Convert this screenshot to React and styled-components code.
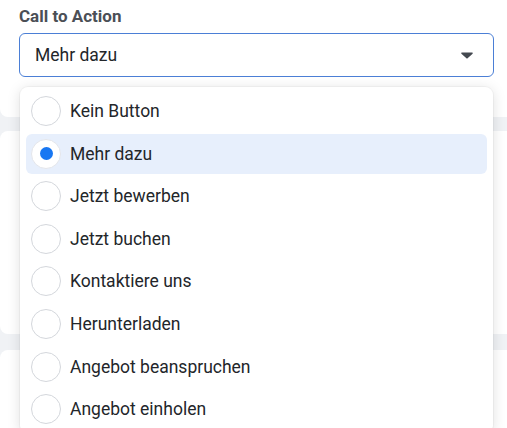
import React, { useState } from "react";
import styled, { createGlobalStyle } from "styled-components";

const GlobalStyle = createGlobalStyle`
  html, body {
    margin: 0;
    padding: 0;
    background: #f0f2f5;
    overflow: hidden;
    font-family: Roboto, "Liberation Sans", Arial, sans-serif;
  }
`;

const options = [
  "Kein Button",
  "Mehr dazu",
  "Jetzt bewerben",
  "Jetzt buchen",
  "Kontaktiere uns",
  "Herunterladen",
  "Angebot beanspruchen",
  "Angebot einholen",
];

const Page = styled.div`
  display: flex;
  flex-direction: column;
  width: 530px;
  height: 428px;
  overflow: hidden;
`;

const Card = styled.div`
  background: #fff;
  border-radius: 8px;
  height: ${(p) => p.h}px;
  margin-top: ${(p) => p.mt || 0}px;
  flex-shrink: 0;
  position: relative;
  z-index: ${(p) => p.z || 0};
`;

const TopCard = styled(Card)`
  border-radius: 0 0 8px 8px;
  padding: 6px 13px 0 19px;
  box-sizing: border-box;
`;

const Label = styled.div`
  font-size: 17px;
  line-height: 20px;
  font-weight: 700;
  color: #4b4f56;
  margin-bottom: 7px;
`;

const Field = styled.div`
  position: relative;
  width: 475px;
`;

const Select = styled.div`
  display: flex;
  align-items: center;
  justify-content: space-between;
  height: 44px;
  box-sizing: border-box;
  border: 1px solid #4b7fd6;
  border-radius: 6px;
  padding: 0 20px 0 15px;
  font-size: 17.5px;
  color: #23262a;
  background: #fff;
`;

const Menu = styled.div`
  position: absolute;
  top: 54px;
  left: 1px;
  width: 473px;
  background: #fff;
  border-radius: 8px;
  box-shadow: 0 2px 14px rgba(0, 0, 0, 0.13), 0 0 0 1px rgba(0, 0, 0, 0.03);
  padding: 4px 6px;
  box-sizing: border-box;
  display: flex;
  flex-direction: column;
  gap: 2.6px;
`;

const Option = styled.div`
  display: flex;
  align-items: center;
  gap: 9px;
  height: 40px;
  padding: 0 5px;
  border-radius: 6px;
  background: ${(p) => (p.selected ? "#e7effc" : "transparent")};
  font-size: 17.5px;
  color: #23262a;
  cursor: pointer;
`;

const Radio = styled.span`
  width: 30px;
  height: 30px;
  box-sizing: border-box;
  border-radius: 50%;
  border: 1px solid ${(p) => (p.checked ? "#e4e6eb" : "#d4d7dc")};
  background: #fff;
  display: flex;
  align-items: center;
  justify-content: center;
  flex-shrink: 0;

  &::after {
    content: "";
    width: 13px;
    height: 13px;
    border-radius: 50%;
    background: #1877f2;
    display: ${(p) => (p.checked ? "block" : "none")};
  }
`;

const Caret = () => (
  <svg width="12" height="7" viewBox="0 0 12 7">
    <path d="M1 0.5h10c.7 0 1 .7.6 1.2L6.6 6.3c-.3.4-.9.4-1.2 0L.4 1.7C0 1.2.3.5 1 .5z" fill="#444950" />
  </svg>
);

export default function App() {
  const [value, setValue] = useState("Mehr dazu");

  return (
    <>
      <GlobalStyle />
      <Page>
        <TopCard h={117} z={2}>
          <Label>Call to Action</Label>
          <Field>
            <Select>
              <span>{value}</span>
              <Caret />
            </Select>
            <Menu>
              {options.map((o) => (
                <Option key={o} selected={o === value} onClick={() => setValue(o)}>
                  <Radio checked={o === value} />
                  {o}
                </Option>
              ))}
            </Menu>
          </Field>
        </TopCard>
        <Card h={203} mt={14} />
        <Card h={100} mt={16} />
      </Page>
    </>
  );
}
